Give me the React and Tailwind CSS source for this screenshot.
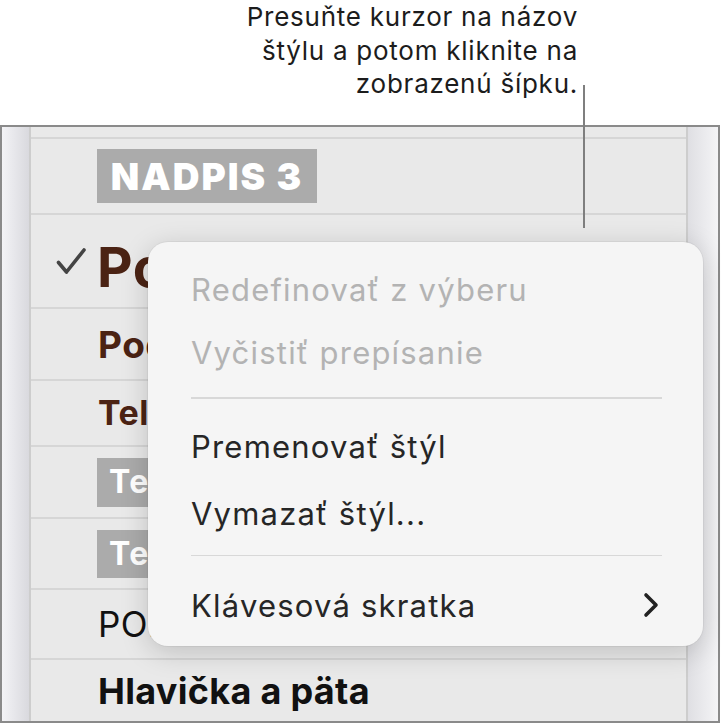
import React from "react";

function Check() {
  return (
    <svg width="31" height="29" viewBox="0 0 31 29" className="shrink-0">
      <path d="M2.5 15.5 L10.5 25 L28 3" fill="none" stroke="#444" strokeWidth="3.6" strokeLinecap="round" strokeLinejoin="round" />
    </svg>
  );
}

function Chevron() {
  return (
    <svg width="16" height="26" viewBox="0 0 16 26">
      <path d="M3 3 L13 13 L3 23" fill="none" stroke="#222" strokeWidth="3.6" strokeLinecap="round" strokeLinejoin="round" />
    </svg>
  );
}

export default function App() {
  const font = { fontFamily: "Inter, 'Noto Sans', sans-serif" };
  return (
    <div className="relative w-[721px] h-[726px] bg-white overflow-hidden" style={font}>
      {/* callout */}
      <div className="h-[125px] pr-[143px] text-right text-[26px] leading-[33.5px] text-[#1c1c1c] tracking-[0.75px]">
        <div>Presuňte kurzor na názov</div>
        <div>štýlu a potom kliknite na</div>
        <div>zobrazenú šípku.</div>
      </div>

      {/* panel */}
      <div className="w-[720px] h-[598px] border-2 border-[#8a8a8a] flex">
        <div className="w-[27px] bg-gradient-to-r from-[#f3f3f6] to-[#d9d9de]" />
        <div className="flex-1 flex flex-col bg-[#e9e9e9] border-l-2 border-r-2 border-[#cdcdcd]">
          <div className="h-[12px] border-b-2 border-[#d6d6d6]" />
          <div className="h-[76px] border-b-2 border-[#d6d6d6] flex items-center pl-[66px]">
            <div className="bg-[#ababab] h-[54px] w-[220px] flex items-center justify-center text-white text-[37px] font-black tracking-[2px] leading-none">
              NADPIS 3
            </div>
          </div>
          <div className="h-[94px] border-b-2 border-[#d6d6d6] flex items-center pl-[25px] gap-[10px]">
            <Check />
            <span className="mt-[12px] text-[55px] font-bold text-[#4b2314] leading-none tracking-[0.5px]">Podnadpis</span>
          </div>
          <div className="h-[72px] border-b-2 border-[#d6d6d6] flex items-center pl-[67px]">
            <span className="text-[37px] font-bold text-[#4b2314] leading-none tracking-[0.5px]">Podnadpis 2</span>
          </div>
          <div className="h-[66px] border-b-2 border-[#d6d6d6] flex items-center pl-[67px]">
            <span className="text-[34px] font-bold text-[#4b2314] leading-none tracking-[0.5px]">Telo</span>
          </div>
          <div className="h-[72px] border-b-2 border-[#d6d6d6] flex items-center pl-[66px]">
            <div className="bg-[#ababab] h-[49px] w-[180px] flex items-center pl-[12px] text-white text-[32px] font-bold leading-none tracking-[1.5px]">
              Text
            </div>
          </div>
          <div className="h-[71px] border-b-2 border-[#d6d6d6] flex items-center pl-[66px]">
            <div className="bg-[#ababab] h-[48px] w-[180px] flex items-center pl-[12px] text-white text-[32px] font-bold leading-none tracking-[1.5px]">
              Text
            </div>
          </div>
          <div className="h-[70px] border-b-2 border-[#d6d6d6] flex items-center pl-[67px]">
            <span className="text-[35px] text-[#111] leading-none tracking-[0.5px]">POPIS</span>
          </div>
          <div className="flex-1 flex items-center pl-[67px]">
            <span className="text-[36px] font-bold text-[#111] leading-none tracking-[0.3px]">Hlavička a päta</span>
          </div>
        </div>
        <div className="w-[30px] bg-gradient-to-r from-[#dfdfe3] to-[#f4f4f6]" />
      </div>

      {/* callout line */}
      <div className="absolute left-[583px] top-[85px] w-[2px] h-[143px] bg-[#7f7f7f]" />

      {/* menu */}
      <div className="absolute left-[148px] top-[242px] w-[555px] h-[404px] rounded-[20px] bg-[#f5f5f5] shadow-[0_6px_28px_rgba(0,0,0,0.18),0_0_0_1px_rgba(0,0,0,0.04)] pt-[15px] text-[31px] tracking-[1.2px] leading-none">
        <div className="h-[64px] flex items-center pl-[43px] text-[#b3b3b3]">Redefinovať z výberu</div>
        <div className="h-[62px] flex items-center pl-[43px] text-[#b3b3b3]">Vyčistiť prepísanie</div>
        <div className="mt-[14px] ml-[43px] mr-[41px] h-[1.5px] bg-[#d8d8d8]" />
        <div className="mt-[16px] h-[64px] flex items-center pl-[43px] text-[#262626]">Premenovať štýl</div>
        <div className="mt-[3px] h-[64px] flex items-center pl-[43px] text-[#262626]">Vymazať štýl...</div>
        <div className="mt-[9px] ml-[43px] mr-[41px] h-[1.5px] bg-[#d8d8d8]" />
        <div className="mt-[17px] h-[64px] flex items-center justify-between pl-[43px] pr-[44px] text-[#262626]">
          <span>Klávesová skratka</span>
          <Chevron />
        </div>
      </div>
    </div>
  );
}
